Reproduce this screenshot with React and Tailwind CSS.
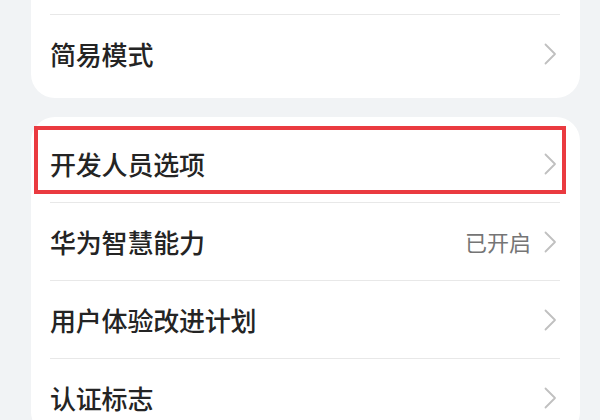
import React from 'react';

const Chevron = () => (
  <svg width="13" height="22" viewBox="0 0 13 22" fill="none" className="shrink-0">
    <path d="M1.5 1.5 L11 11 L1.5 20.5" stroke="#c0c0c0" strokeWidth="1.8" strokeLinecap="round" strokeLinejoin="round" />
  </svg>
);

const Divider = () => <div className="h-px bg-[#e8e8e8] ml-[19px] mr-[20px]" />;

const Row = ({ title, value, marked }) => (
  <div className="relative h-[77px] flex items-center pl-[19px] pr-[23px]">
    <span className="flex-1 text-[26px] text-[#242424] font-medium tracking-[-0.2px]">{title}</span>
    {value && <span className="text-[22px] text-[#757575] mr-[13px]">{value}</span>}
    <Chevron />
    {marked && (
      <div className="absolute left-[3px] right-[14px] top-[1px] h-[68px] border-[4.5px] border-[#ea3a40] pointer-events-none" />
    )}
  </div>
);

const App = () => {
  const items = [
    { title: '开发人员选项', marked: true },
    { title: '华为智慧能力', value: '已开启' },
    { title: '用户体验改进计划' },
    { title: '认证标志' }
  ];

  return (
    <div
      className="w-[600px] h-[420px] overflow-hidden bg-[#f1f3f5] pl-[31px] pr-[20px]"
      style={{ fontFamily: '"Noto Sans CJK SC", "Noto Sans", sans-serif' }}
    >
      {/* top card, mostly scrolled away */}
      <div className="bg-white rounded-b-[24px] pt-[14px] pb-[6px]">
        <Divider />
        <Row title="简易模式" />
      </div>

      <div className="bg-white rounded-[24px] mt-[19px] pt-[8px]">
        {items.map((item, i) => (
          <div key={item.title}>
            {i > 0 && <Divider />}
            <Row {...item} />
          </div>
        ))}
      </div>
    </div>
  );
};

export default App;
